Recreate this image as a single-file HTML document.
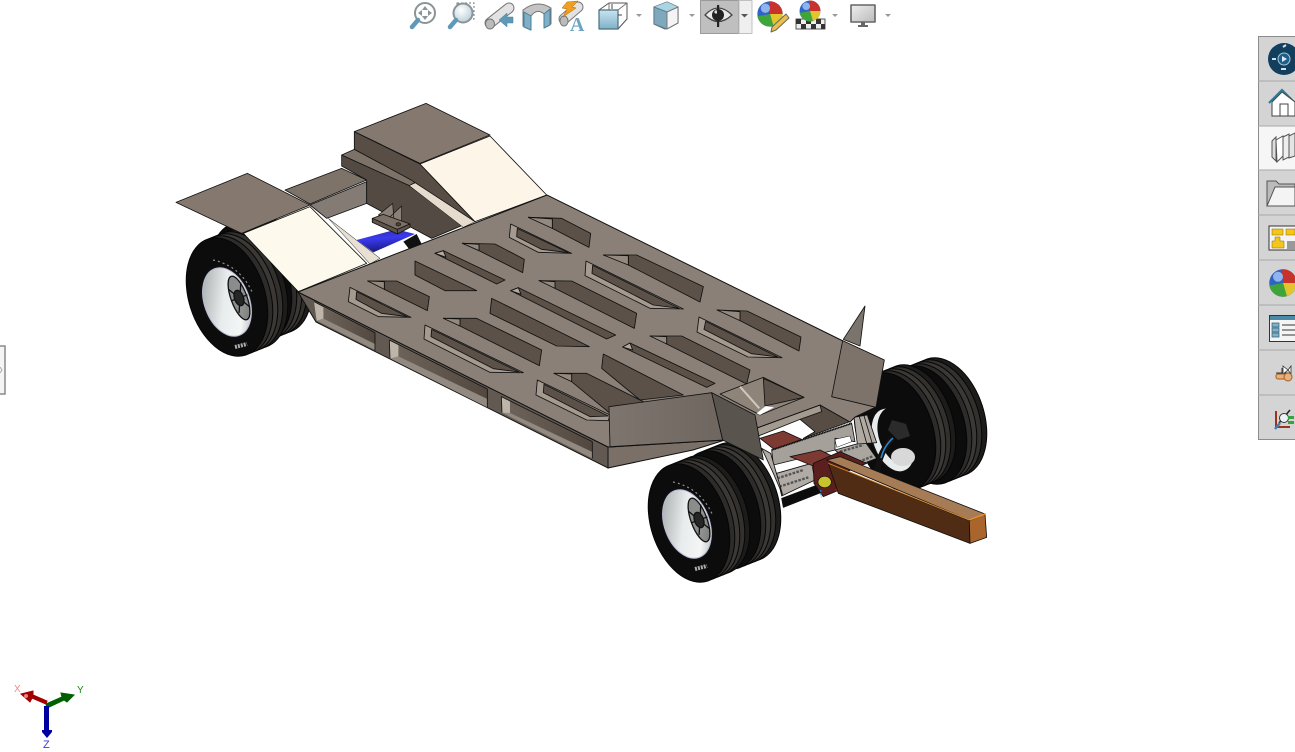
<!DOCTYPE html>
<html><head><meta charset="utf-8"><style>
html,body{margin:0;padding:0;background:#fff;width:1295px;height:752px;overflow:hidden}
svg{position:absolute;left:0;top:0;font-family:"Liberation Sans",sans-serif}
</style></head><body>
<svg width="1295" height="752" viewBox="0 0 1295 752" xmlns="http://www.w3.org/2000/svg">
<defs>
<linearGradient id="blue" x1="0" y1="0" x2="0.2" y2="1"><stop offset="0" stop-color="#2a2a9c"/><stop offset=".45" stop-color="#3a3af0"/><stop offset="1" stop-color="#1a1a80"/></linearGradient>
<linearGradient id="rim" x1="0" y1=".1" x2="1" y2=".9"><stop offset="0" stop-color="#9ea3a3"/><stop offset=".45" stop-color="#e8ecec"/><stop offset=".75" stop-color="#f4f6f6"/><stop offset="1" stop-color="#a8acac"/></linearGradient>
<linearGradient id="flap" x1="0" y1="0" x2="1" y2="0"><stop offset="0" stop-color="#7d756e"/><stop offset="1" stop-color="#6e665f"/></linearGradient>
<linearGradient id="wall" x1="0" y1="0" x2="1" y2="0"><stop offset="0" stop-color="#6c6259"/><stop offset="1" stop-color="#52483f"/></linearGradient>
<linearGradient id="ic" x1="0" y1="0" x2="0" y2="1"><stop offset="0" stop-color="#c8e4f0"/><stop offset="1" stop-color="#7fb0c8"/></linearGradient>
<radialGradient id="lens" cx=".4" cy=".35" r=".7"><stop offset="0" stop-color="#fff"/><stop offset="1" stop-color="#b9cdd6"/></radialGradient>
<linearGradient id="scr" x1="0" y1="0" x2="1" y2="1"><stop offset="0" stop-color="#eee"/><stop offset="1" stop-color="#bbb"/></linearGradient>
<g id="tyre">
<ellipse transform="translate(20 -8) rotate(-18)" rx="38" ry="61" fill="#1d1c1b" stroke="#050505"/>
<ellipse transform="translate(15 -6) rotate(-18)" rx="38" ry="61" fill="#33312e" stroke="#050505"/>
<ellipse transform="translate(10 -4) rotate(-18)" rx="38" ry="61" fill="#3b3835" stroke="#050505"/>
<ellipse transform="translate(5 -2) rotate(-18)" rx="38" ry="61" fill="#2e2c2a" stroke="#050505"/>
<ellipse transform="rotate(-18)" rx="38" ry="61" fill="#0c0c0c" stroke="#050505"/>
</g>
<g id="rimset">
<g transform="rotate(-20)">
<ellipse rx="24" ry="37" fill="#111"/>
<ellipse rx="22.5" ry="35.5" fill="url(#rim)" stroke="#b9bcd8" stroke-width="1"/>
</g>
<g transform="translate(12 -4) rotate(-20)" fill="none" stroke="#111" stroke-width="1.3">
<ellipse rx="8" ry="23" fill="#3a3a3a" fill-opacity=".55"/>
<path d="M-7 -12L7 12M7 -14L-5 14M-8 0H9"/>
<ellipse rx="4.5" ry="8" fill="#262626"/>
</g>
<path d="M-14 -42Q14 -36 26 -8" fill="none" stroke="#8d8d8d" stroke-width="1.2" stroke-dasharray="2 3"/>
<path d="M8 45L20 42" fill="none" stroke="#aaa" stroke-width="4" stroke-dasharray="2 1"/>
</g>
<g id="ball">
<circle r="11" fill="#2f63c4"/>
<path d="M0 0L-1-11A11 11 0 0 1 11 0Z" fill="#c8322c"/>
<path d="M0 0L11 0A11 11 0 0 1 3 10.5Z" fill="#e2c42c"/>
<path d="M0 0L3 10.5A11 11 0 0 1-11 2Z" fill="#3fa43a"/>
<circle cx="-4" cy="-5" r="4" fill="#8fb4ee"/>
</g>
</defs>

<!-- LEFT WHEEL -->
<use href="#tyre" transform="translate(251,282)"/>
<use href="#tyre" transform="translate(227,297)"/>
<use href="#rimset" transform="translate(227,302)"/>

<!-- REAR STRUCTURE (zoom 3 coordinates) -->
<g transform="translate(170 90) scale(.33333)" stroke="#111" stroke-width="2.5" stroke-linejoin="round">
<path d="M345 300L515 235L590 270L420 342Z" fill="#7e7369"/>
<path d="M420 345L590 275L590 340L470 385Z" fill="#847c74"/>
<path d="M475 385L630 505L600 522Z" fill="#e8e0d2" stroke-width="1.5"/>
<path d="M560 450L680 418L735 432L610 487Z" fill="url(#blue)" stroke="none"/>
<path d="M700 455L740 432L755 462L718 478Z" fill="#111" stroke="none"/>
<path d="M515 195L515 228L590 270L590 340L785 445L880 405L715 285Z" fill="#534a43"/>
<path d="M515 195L553 178L745 272L718 287Z" fill="#7d7268"/>
<path d="M718 287L750 272L915 395L880 412Z" fill="#e6dccd" stroke-width="1.5"/>
<path d="M553 125L750 222L915 395L720 268L553 178Z" fill="#584e46"/>
<path d="M553 125L768 40L960 135L750 220Z" fill="#85796f"/>
<path d="M960 138L1130 315L915 395L750 222Z" fill="#fdf6e8"/>
<path d="M625 375L668 340L672 392Z M655 385L695 348L695 400Z" fill="#8a8076" stroke-width="2"/>
<path d="M607 385L640 373L720 402L682 418L607 395Z" fill="#7c7066"/>
<path d="M607 385L682 418L682 432L607 397Z M682 418L720 402L720 412L682 432Z" fill="#5e544b"/>
<ellipse cx="685" cy="403" rx="7" ry="5" fill="#4a423b" stroke-width="2"/>
<path d="M18 337L232 250L420 345L215 430Z" fill="#85796f"/>
<path d="M420 350L590 520L385 605L220 430Z" fill="#fdf9ec"/>
</g>

<!-- RIGHT WHEEL -->
<use href="#tyre" transform="translate(926,425)"/>
<use href="#tyre" transform="translate(895,432)"/>
<g>
<ellipse cx="893" cy="440" rx="20" ry="33" transform="rotate(-20 893 440)" fill="#e8ecec" stroke="#111"/>
<ellipse cx="898" cy="436" rx="19" ry="30" transform="rotate(-20 898 436)" fill="#0c0c0c"/>
<ellipse cx="903" cy="457" rx="12" ry="9" fill="#d8d8d8"/>
<path d="M892 420L906 424L910 436L898 440L888 430Z" fill="#2b2b2b"/>
<path d="M877 472Q880 450 893 438" fill="none" stroke="#111" stroke-width="6"/>
<path d="M881 458Q884 446 893 438" fill="none" stroke="#2a86c8" stroke-width="1.6"/>
</g>

<!-- UNDERSTRUCTURE (zoom 8 coordinates) -->
<g transform="translate(740 370) scale(.33333)" stroke="#111" stroke-width="2.5" stroke-linejoin="round">
<path d="M125 385L245 340L250 365L130 412Z" fill="#0c0c0c"/>
<path d="M110 310L215 280L225 330L125 378Z" fill="#b0aba5"/>
<path d="M112 325L190 300M118 350L205 322" stroke="#555" stroke-width="7" stroke-dasharray="8 4" fill="none"/>
<path d="M285 240L375 215L410 265L345 290Z" fill="#aaa59f"/>
<path d="M300 245L370 225M345 280L400 258" stroke="#555" stroke-width="7" stroke-dasharray="8 4" fill="none"/>
<path d="M180 148L240 105L330 155L190 205L225 185Z" fill="#574d45"/>
<path d="M50 172L240 105L245 125L180 148L55 198Z" fill="#a39a90"/>
<path d="M60 205L130 183L185 208L105 240Z" fill="#7d3a33"/>
<path d="M95 240L185 210L335 160L345 215L285 205L285 240L100 285Z" fill="#a5a09a"/>
<path d="M95 240L335 160" stroke-width="6" stroke-dasharray="3 2" fill="none"/>
<path d="M285 208L330 198L335 215L290 232Z" fill="#fff" stroke-width="1.5"/>
<path d="M342 142L382 135L410 218L352 222Z" fill="#b0aaa3"/>
<path d="M358 140L380 220M372 137L396 218" fill="none"/>
<path d="M65 235L92 250L128 375L100 310Z" fill="#b0aaa3"/>
<path d="M150 260L240 240L290 265L225 290Z" fill="#7d3a33"/>
</g>

<!-- FRONT WHEEL -->
<use href="#tyre" transform="translate(720,510)"/>
<use href="#tyre" transform="translate(689,523)"/>
<use href="#rimset" transform="translate(687,524)"/>

<!-- PLATE BODY -->
<path d="M298 292L316 322L608 468L608 447Z" fill="#625a52" stroke="#111"/>
<path d="M608 447L608 468L693 450L725 440Z" fill="#7a7067" stroke="#111"/>
<path d="M298 292L547 195L843 341L884 360L876 407L855 417L850 422L820 405L757 428L723 440L610 447L608 447Z" fill="#8a8077" stroke="#111" stroke-width="1"/>

<!-- SIDE POCKETS -->
<g transform="translate(300 290) scale(.33333)" stroke-linejoin="round">
<path d="M42 35L225 128V180L50 92Z" fill="#928a80"/>
<path d="M70 52L225 128V162L70 86Z" fill="url(#wall)"/>
<path d="M42 35L70 52V86L50 92Z" fill="#bdb5aa"/>
<path d="M42 35L225 128M225 128V182" stroke="#111" stroke-width="2.5" fill="none"/>
<path d="M268 150L562 297V352L270 205Z" fill="#928a80"/>
<path d="M295 165L562 297V327L295 199Z" fill="url(#wall)"/>
<path d="M268 150L295 165V199L270 205Z" fill="#bdb5aa"/>
<path d="M268 150L562 297M562 297V352M268 150L270 205" stroke="#111" stroke-width="2.5" fill="none"/>
<path d="M604 320L877 455V505L606 368Z" fill="#928a80"/>
<path d="M630 333L877 455V486L630 369Z" fill="url(#wall)"/>
<path d="M604 320L630 333V369L606 368Z" fill="#bdb5aa"/>
<path d="M604 320L877 455M877 455V505M604 320L606 368" stroke="#111" stroke-width="2.5" fill="none"/>
</g>

<!-- HOLES (zoom 5 coordinates) -->
<g transform="translate(300 200) scale(.33333)" stroke="#111" stroke-width="2.6" stroke-linejoin="round">
<path d="M685 52L785 55L872 100L867 142L757 85L757 57Z" fill="#5c5148"/><path d="M685 52L757 57L757 85Z" fill="#94897f"/>
<path d="M487 130L585 132L673 178L668 218L537 152L537 133Z" fill="#5c5148"/><path d="M487 130L537 133L537 152Z" fill="#94897f"/>
<path d="M203 243L290 243L388 290L382 332L253 268L253 245Z" fill="#5c5148"/><path d="M203 243L253 245L253 268Z" fill="#94897f"/>
<path d="M910 165L1010 165L1210 260L1200 306L985 195L985 167Z" fill="#5c5148"/><path d="M910 165L985 167L985 195Z" fill="#94897f"/>
<path d="M717 242L815 243L1010 340L1003 385L765 265L765 245Z" fill="#5c5148"/><path d="M717 242L765 245L765 265Z" fill="#94897f"/>
<path d="M430 355L530 355L725 450L718 497L480 378L480 357Z" fill="#5c5148"/><path d="M430 355L480 357L480 378Z" fill="#94897f"/>
<path d="M762 520L860 520L1030 605L930 640L815 545L815 522Z" fill="#5c5148"/><path d="M762 520L815 522L815 545Z" fill="#94897f"/>
<path d="M1050 408L1145 408L1350 510L1340 552L1100 432L1100 410Z" fill="#5c5148"/><path d="M1050 408L1100 410L1100 432Z" fill="#94897f"/>
<path d="M1251 330L1341 333L1503 411L1497 453L1320 362L1320 335Z" fill="#5c5148"/><path d="M1251 330L1320 335L1320 362Z" fill="#94897f"/>
<path d="M632 72L815 160L715 157L628 112Z" fill="#a49a8f"/><path d="M652 85L805 158L725 148L650 110Z" fill="#5c5148"/>
<path d="M150 262L333 352L235 350L145 305Z" fill="#a49a8f"/><path d="M170 275L322 350L245 340L168 298Z" fill="#5c5148"/>
<path d="M858 183L1150 327L1050 325L855 227Z" fill="#a49a8f"/><path d="M878 196L1138 325L1060 315L876 220Z" fill="#5c5148"/>
<path d="M375 375L670 518L570 517L372 417Z" fill="#a49a8f"/><path d="M395 388L658 516L580 506L393 410Z" fill="#5c5148"/>
<path d="M712 540L930 645L925 662L860 660L708 585Z" fill="#a49a8f"/><path d="M732 553L925 648L870 650L730 578Z" fill="#5c5148"/>
<path d="M1197 351L1446 473L1344 471L1191 396Z" fill="#a49a8f"/><path d="M1217 364L1434 471L1354 461L1212 388Z" fill="#5c5148"/>
<path d="M345 183L530 272L435 272L345 225Z" fill="#5c5148"/>
<path d="M575 295L868 440L770 438L570 340Z" fill="#5c5148"/>
<path d="M910 462L1150 585L1020 600L905 505Z" fill="#5c5148"/>
<path d="M405 160L430 152L615 240L590 252Z" fill="#5c5148"/><path d="M405 160L430 152L438 172Z" fill="#b3aa9f"/>
<path d="M632 272L655 263L947 405L920 417Z" fill="#5c5148"/><path d="M632 272L655 263L663 283Z" fill="#b3aa9f"/>
<path d="M968 441L990 429L1245 550L1220 562Z" fill="#5c5148"/><path d="M968 441L990 429L998 450Z" fill="#b3aa9f"/>
</g>

<!-- REAR END OF PLATE (zoom 4 coordinates) -->
<g transform="translate(600 300) scale(.33333)" stroke="#111" stroke-width="2.5" stroke-linejoin="round">
<path d="M360 282L490 232L612 292L480 345Z" fill="#8e8479"/>
<path d="M490 235L612 292L495 318Z" fill="#5e534b"/>
<path d="M420 260L478 325" stroke="#cfc8bf" stroke-width="6" fill="none"/>
<path d="M470 340L497 318L522 322L480 345Z" fill="#fff" stroke="none"/>
<path d="M795 18L730 118L780 138Z" fill="#7a746c"/>
<path d="M728 122L853 180L828 322L695 290Z" fill="#7e736b"/>
<path d="M27 320L335 278L368 420L30 440Z" fill="url(#flap)"/>
<path d="M335 278L465 345L490 480L368 420Z" fill="#5a544f"/>
<path d="M640 490L720 455L800 490L705 530L718 570L670 590L642 550Z" fill="#5b201d"/>
<path d="M705 515Q725 540 710 572" stroke="#d0202a" stroke-width="8" fill="none"/>
<path d="M680 480L720 470L1155 642L1108 660Z" fill="#a67c57"/>
<path d="M685 490L1108 662L1110 730L715 580Z" fill="#512c15"/>
<path d="M685 490L1108 660" stroke="#d98a2c" stroke-width="3" fill="none"/>
<path d="M1108 662L1155 642L1160 712L1110 730Z" fill="#a9652b"/>
<path d="M1108 660L1155 642" stroke="#f0962c" stroke-width="4" fill="none"/>
<ellipse cx="674" cy="546" rx="20" ry="17" fill="#c9c22c" stroke-width="2"/>
<path d="M662 570L664 592" stroke="#1c86d0" stroke-width="4" stroke-dasharray="6 4" fill="none"/>
</g>

<!-- TRIAD -->
<g>
<path d="M46 704L32 698L30 702L21 694L33 691L33 695L47 701Z" fill="#a00000" stroke="#a00000"/>
<circle cx="26" cy="696" r="2" fill="#f08080"/>
<path d="M46 704L62 697L61 693L74 695L67 702L64 700L47 708Z" fill="#006000" stroke="#006000"/>
<path d="M44 706H49V730H52V732L47 738L42 732V730H44Z" fill="#0000a0"/>
<text x="14" y="692" font-size="10" fill="#f08a8a">X</text>
<text x="77" y="693" font-size="10" fill="#109010">Y</text>
<text x="43" y="748" font-size="11" fill="#3a3ae8">Z</text>
</g>

<!-- LEFT HANDLE -->
<path d="M0 346H5V394H0" fill="#f5f5f5" stroke="#8a8a8a" stroke-width="1.5"/>
<path d="M0 367L2 370L0 373" stroke="#aaa" fill="none"/>

<!-- TOP TOOLBAR -->
<g stroke-linejoin="round">
<circle cx="425" cy="13" r="10" fill="#fff" stroke="#8a9498" stroke-width="2"/>
<path d="M425 6l3 4h-6zM425 20l3-4h-6zM418 13l4-3v6zM432 13l-4-3v6z" fill="#8a9498"/>
<path d="M418 20L412 27" stroke="#5e9ab8" stroke-width="4.5" stroke-linecap="round"/>
<rect x="457" y="3" width="17" height="16" fill="none" stroke="#777" stroke-dasharray="2 2"/>
<circle cx="463" cy="13" r="9.5" fill="url(#lens)" stroke="#8a9498" stroke-width="2"/>
<path d="M456 20L450 27" stroke="#5e9ab8" stroke-width="4.5" stroke-linecap="round"/>
<path d="M490 23L509 8" stroke="#777" stroke-width="11" stroke-linecap="round"/>
<path d="M490 23L509 8" stroke="#e2e2e2" stroke-width="9" stroke-linecap="round"/>
<ellipse cx="490" cy="24" rx="4.5" ry="5" fill="#bbb" stroke="#777"/>
<path d="M499 20L507 13V17H513V23H507V27Z" fill="#5e9ab8" stroke="#4a7f98" stroke-width=".5"/>
<path d="M523 10Q537 -1 551 8V24L544 28V14Q537 8 531 16V30L523 26Z" fill="#c4c4c4" stroke="#777"/>
<path d="M524 12L531 16V30L524 27ZM544 14L550 9V25L544 28Z" fill="#7fb0c8" stroke="#4a7f98"/>
<path d="M564 19L578 7" stroke="#777" stroke-width="11" stroke-linecap="round"/>
<path d="M564 19L578 7" stroke="#e2e2e2" stroke-width="9" stroke-linecap="round"/>
<ellipse cx="564" cy="21" rx="4" ry="5" fill="#bbb" stroke="#777"/>
<path d="M567 2L578 1L572 7L576 8L563 17L567 9L562 8Z" fill="#f0a020" stroke="#b06000" stroke-width=".5"/>
<text x="570" y="31" font-family="Liberation Serif,serif" font-size="20" font-weight="bold" fill="#6fa5c0">A</text>
<path d="M599 10L609 3H627V19L618 29" fill="#fff" stroke="#555"/>
<path d="M609 3V10M618 10L627 3" stroke="#777" fill="none"/>
<rect x="599" y="10" width="19" height="19" fill="url(#ic)" stroke="#4a6f80" stroke-width="1.2"/>
<path d="M612 4V9M622 15H618" stroke="#444" fill="none"/>
<path d="M636 14h6l-3 3z" fill="#999"/>
<path d="M654 7L667 2L678 7V23L665 29L654 24Z" fill="#d9e4e8" stroke="#666" stroke-width="1.2"/>
<path d="M654 7L667 12L678 7L667 2Z" fill="#a8d4e4"/>
<path d="M654 7L667 12V29L654 24Z" fill="#7fa8bc" stroke="#5b7f90"/>
<path d="M667 12L678 7V23L667 29Z" fill="#f4f4f4" stroke="#777"/>
<path d="M689 14h6l-3 3z" fill="#999"/>
<rect x="700.5" y=".5" width="38" height="33" fill="#bfbfbf" stroke="#9a9a9a"/>
<rect x="739" y=".5" width="13" height="33" fill="#efefef" stroke="#c0c0c0"/>
<path d="M705 15Q718 1 732 15Q718 28 705 15Z" fill="#e8e8e8" stroke="#444" stroke-width="1.3"/>
<circle cx="718" cy="15" r="6" fill="#222"/>
<circle cx="716" cy="12" r="1.6" fill="#ddd"/>
<rect x="717" y="5" width="2.2" height="22" fill="#222"/>
<path d="M741 14h7l-3.5 3.5z" fill="#555"/>
<use href="#ball" transform="translate(770,14) scale(1.15)"/>
<path d="M786 14L789 18L776 30L771 32L772 27Z" fill="#e8c050" stroke="#666"/>
<path d="M796 19H825V29H796Z" fill="#eee" stroke="#555"/>
<path d="M796 19h5v5h-5zM806 19h5v5h-5zM816 19h5v5h-5zM801 24h5v5h-5zM811 24h5v5h-5zM821 24h4v5h-4z" fill="#333"/>
<use href="#ball" transform="translate(810,11) scale(.95)"/>
<path d="M832 14h6l-3 3z" fill="#999"/>
<rect x="851" y="5" width="24" height="17" fill="url(#scr)" stroke="#666" stroke-width="1.6"/>
<path d="M861 22h4v3h3v2h-10v-2h3z" fill="#666"/>
<path d="M885 14h6l-3 3z" fill="#999"/>
</g>

<!-- RIGHT SIDEBAR -->
<g>
<rect x="1258.5" y="36.5" width="40" height="403" fill="#d4d4d4" stroke="#8c8c8c"/>
<rect x="1259" y="126" width="36" height="44" fill="#f6f6f6"/>
<path d="M1258 81H1295M1258 126H1295M1258 170H1295M1258 215H1295M1258 260H1295M1258 305H1295M1258 350H1295M1258 395H1295" stroke="#a8a8a8"/>
<circle cx="1284" cy="59" r="16" fill="#123f5e"/>
<circle cx="1284" cy="59" r="6" fill="#1d5f8a" stroke="#a8c8dc"/>
<path d="M1282 56l5 3l-5 3z" fill="#dfe9ef"/>
<path d="M1272 59h4M1283 47l3-2M1281 69h5" stroke="#cfe0ea" stroke-width="2"/>
<path d="M1269 103L1282 90L1295 103" fill="#fff" stroke="#2f7896" stroke-width="2.2"/>
<path d="M1272 102V116H1295V102L1282 92Z" fill="#fff" stroke="#444"/>
<rect x="1280" y="104" width="8" height="12" fill="#fff" stroke="#444"/>
<path d="M1272 141L1276 137V161L1272 157Z" fill="#ddd" stroke="#555"/>
<path d="M1276 140L1283 136V156L1277 162Z" fill="#fff" stroke="#555"/>
<path d="M1283 137L1289 134V157L1283 160Z" fill="#eee" stroke="#555"/>
<path d="M1289 136L1295 133V156L1289 158Z" fill="#e4e4e4" stroke="#555"/>
<path d="M1267 206V181H1276L1279 184H1295V206Z" fill="#bbb" stroke="#555"/>
<path d="M1267 206L1275 187H1295V206Z" fill="#f4f4f4" stroke="#555"/>
<rect x="1269" y="226" width="28" height="24" fill="#f4f4f4" stroke="#333"/>
<rect x="1272" y="229" width="11" height="6" fill="#f5c518" stroke="#8a6d00" stroke-width=".5"/>
<rect x="1286" y="229" width="9" height="6" fill="#f5c518" stroke="#8a6d00" stroke-width=".5"/>
<path d="M1275 237h5v4h4v7h-12v-7h3z" fill="#f5c518" stroke="#8a6d00" stroke-width=".5"/>
<rect x="1287" y="241" width="8" height="8" fill="#999"/>
<g transform="translate(1283,283) scale(1.25)"><use href="#ball"/></g>
<rect x="1269.5" y="315.5" width="30" height="26" fill="#f4f4f4" stroke="#333"/>
<rect x="1270" y="316" width="25" height="4" fill="#4a8aa8"/>
<path d="M1272 323h7v4h-7zM1272 328h7v4h-7zM1272 333h7v4h-7z" fill="#7fb0c8" stroke="#2f6078" stroke-width=".7"/>
<path d="M1282 325h13M1282 330h13M1282 335h13" stroke="#333"/>
<path d="M1276 373h12M1282 368v5" stroke="#333" fill="none"/>
<path d="M1283 366l5 4l-5 4zM1291 366l-3 4l3 4z" fill="#fff" stroke="#333" stroke-width=".8"/>
<rect x="1276" y="374" width="14" height="5" rx="2" fill="#eab07a" stroke="#a0602a"/>
<circle cx="1288" cy="377" r="4" fill="#eab07a" stroke="#a0602a"/>
<path d="M1276 411V427H1290" stroke="#a03020" stroke-width="2" fill="none"/>
<path d="M1279 423L1290 410" stroke="#222" stroke-width="1.5"/>
<circle cx="1284" cy="418" r="4.5" fill="#eaf4f8" stroke="#333"/>
<path d="M1280 423L1275 429" stroke="#3f7fb0" stroke-width="2.5"/>
<path d="M1288 416h6v3h-6zM1288 421h6v3h-6z" fill="#3aa040"/>
</g>
</svg>
</body></html>
